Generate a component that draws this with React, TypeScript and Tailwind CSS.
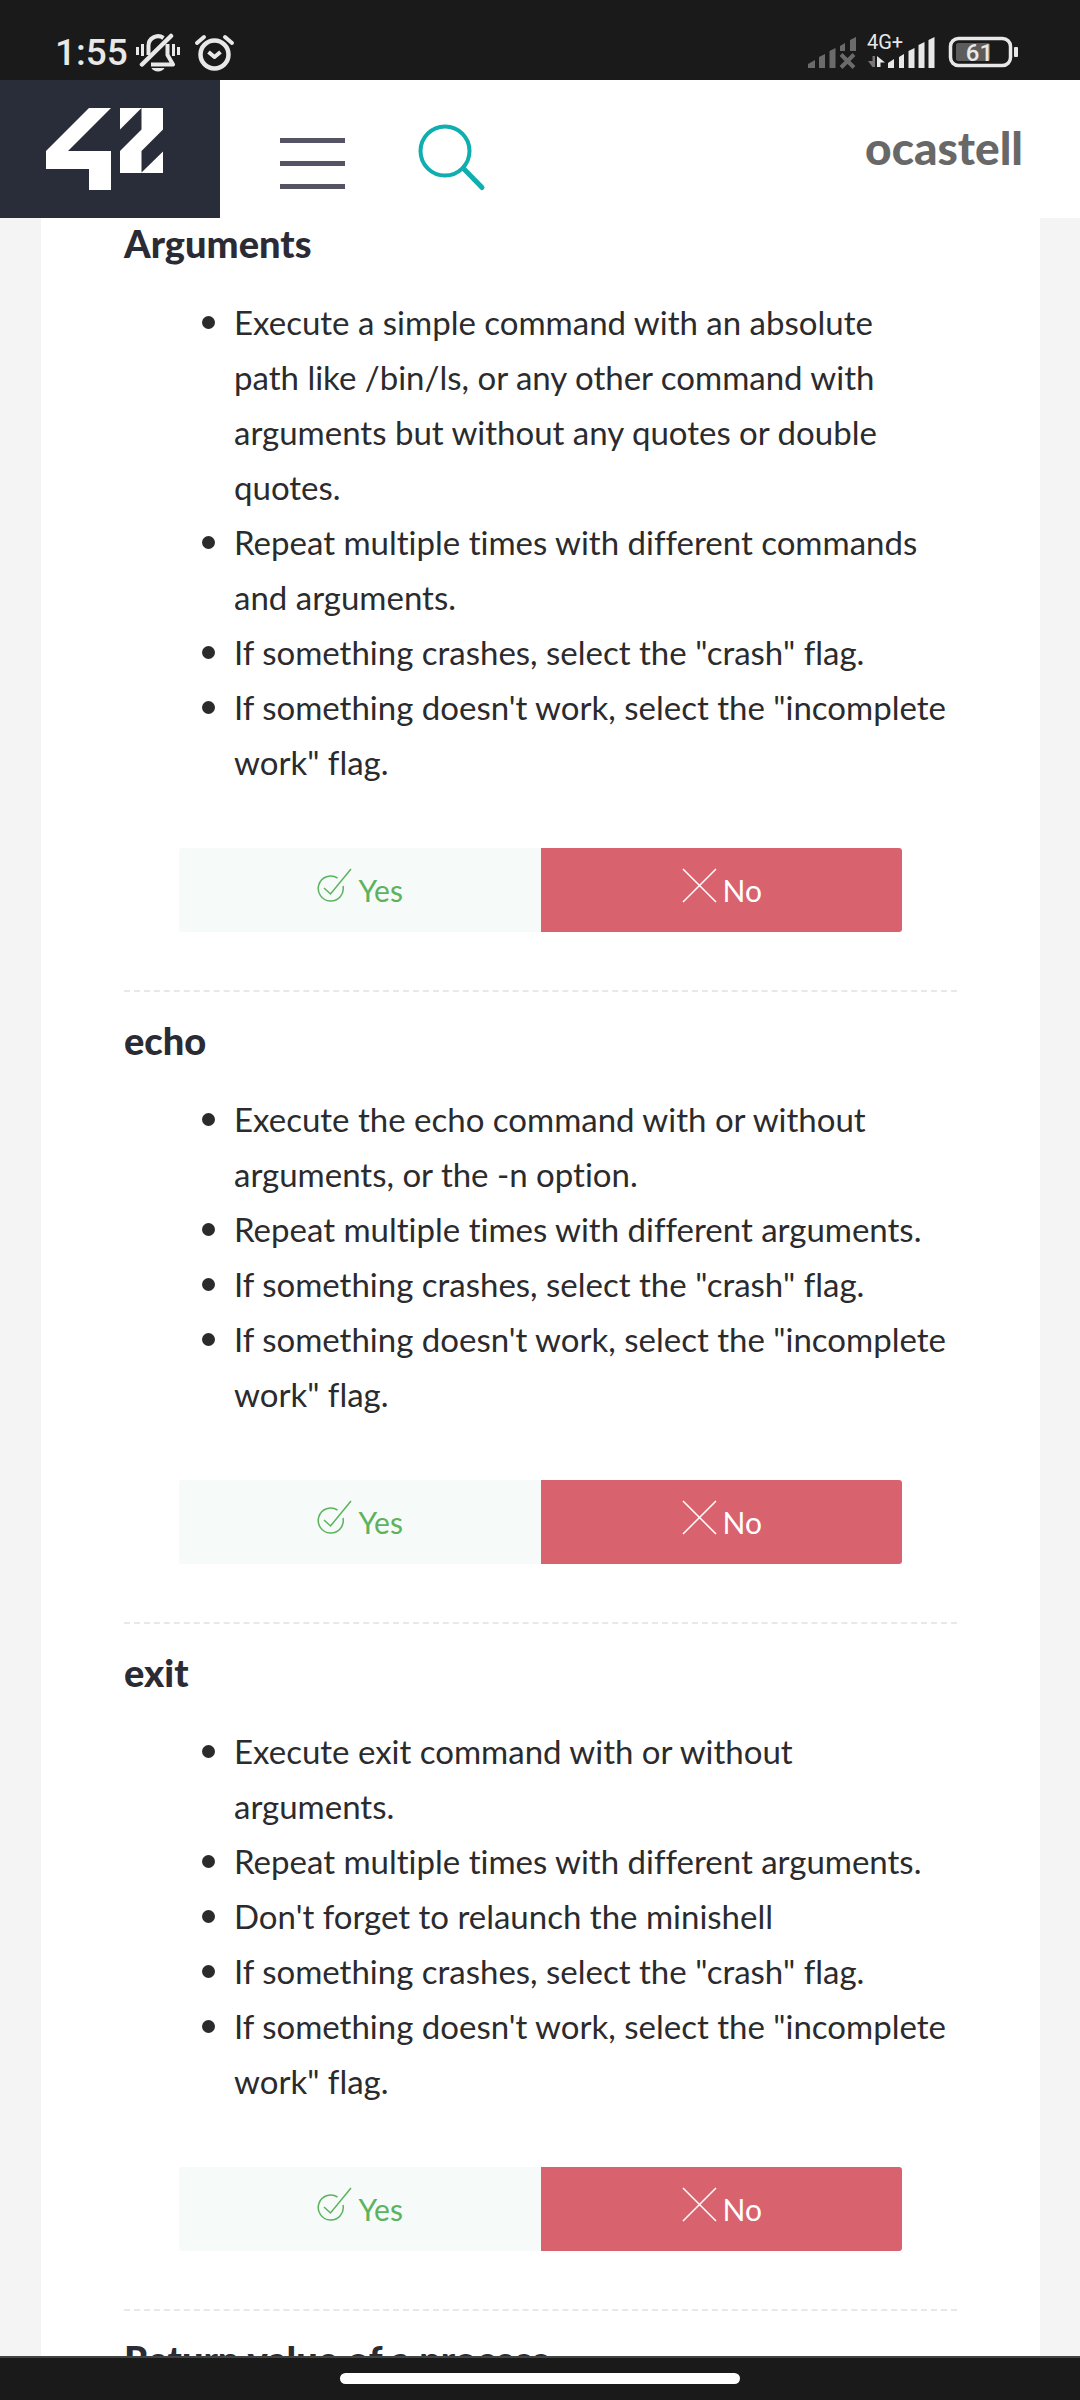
import { useState } from 'react';

type Item = { title: string; points: string[] };

const ITEMS: Item[] = [
  {
    title: 'Arguments',
    points: [
      'Execute a simple command with an absolute path\u00a0like /bin/ls, or any other command with arguments but without any quotes or double quotes.',
      'Repeat multiple times with different commands and arguments.',
      'If something crashes, select the "crash" flag.',
      'If something doesn\'t work, select the "incomplete work" flag.',
    ],
  },
  {
    title: 'echo',
    points: [
      'Execute the echo command with or without arguments, or the -n option.',
      'Repeat multiple times with different arguments.',
      'If something crashes, select the "crash" flag.',
      'If something doesn\'t work, select the "incomplete work" flag.',
    ],
  },
  {
    title: 'exit',
    points: [
      'Execute exit command with or without arguments.',
      'Repeat multiple times with different arguments.',
      "Don't forget to relaunch the minishell",
      'If something crashes, select the "crash" flag.',
      'If something doesn\'t work, select the "incomplete work" flag.',
    ],
  },
  { title: 'Return value of a process', points: [] },
];

function MutedBell() {
  return (
    <svg className="h-[40px] w-[46px]" viewBox="135 33 46 40" fill="none" stroke="#e8e8e8" aria-hidden="true">
      <path d="M137.500 47v8M142.500 44v12M173.500 44v12M178.500 47v8" strokeWidth="3" />
      <path d="M148.500 55V46a9.500 9.500 0 0 1 15-8M167.500 44v11l5.500 9.500H151" strokeWidth="4" strokeLinejoin="round" />
      <path d="M142 64.500L171 36" strokeWidth="4.500" strokeLinecap="round" />
      <path d="M151.500 68h13c-2 4.500-11 4.500-13 0z" fill="#e8e8e8" stroke="none" />
    </svg>
  );
}

function AlarmClock() {
  return (
    <svg className="h-[40px] w-[42px]" viewBox="193 32 42 40" fill="none" stroke="#e8e8e8" aria-hidden="true">
      <circle cx="214.500" cy="53.500" r="14" strokeWidth="4.500" />
      <path d="M208.500 51l6 5 6-5" strokeWidth="4" strokeLinejoin="round" />
      <path d="M197 42l7-6M232 42l-7-6" strokeWidth="4" strokeLinecap="round" />
    </svg>
  );
}

function NoSignal() {
  return (
    <svg className="h-[34px] w-[48px]" viewBox="808 36 48 34" fill="#6b6b6b" aria-hidden="true">
      <path d="M808 64l7-4v8h-7zM819 57l6-3v14h-6zM829.500 51l6-3v20h-6zM840 46l5-3v8h-5zM850 40l6-3v14h-6z" />
      <path d="M841 54.500l13 13M854 54.500l-13 13" stroke="#6b6b6b" strokeWidth="4" />
    </svg>
  );
}

function Signal() {
  return (
    <svg className="h-[34px] w-[68px]" viewBox="867 36 68 34" fill="#e8e8e8" aria-hidden="true">
      <path d="M872.500 56v11h2.500V56zM868 61h4.500v6z" fill="#777" />
      <path d="M877 56l8 6.500h-4.500V67H877z" />
      <path d="M888 63l6-4v9h-6zM899 57l5-3v14h-5zM908.500 51l6-3v20h-6zM918.500 45l6-3v26h-6zM928.500 40l6-3v31h-6z" />
    </svg>
  );
}

function Battery() {
  return (
    <svg className="h-[32px] w-[70px]" viewBox="948 36 70 32" aria-hidden="true">
      <rect x="950.500" y="38.500" width="60" height="27" rx="8" fill="none" stroke="#e8e8e8" strokeWidth="3.500" />
      <rect x="956" y="43" width="34" height="18" rx="2" fill="#5c5c5c" />
      <rect x="1014" y="47" width="4" height="10" rx="1" fill="#e8e8e8" />
    </svg>
  );
}

function StatusBar() {
  return (
    <div className="flex h-[80px] shrink-0 items-start justify-between bg-[#1a1a1a] pl-[55px] pr-[62px] pt-[32px] font-['Roboto',sans-serif] text-[#e8e8e8]">
      <div className="flex items-center">
        <span className="text-[37px] font-medium leading-[42px]">1:55</span>
        <span className="ml-[7px] flex gap-[12px]">
          <MutedBell />
          <AlarmClock />
        </span>
      </div>
      <div className="flex items-start pt-[4px]">
        <NoSignal />
        <div className="relative ml-[11px]">
          <Signal />
          <span className="absolute left-0 -top-[4px] text-[20px] leading-[20px]">4G+</span>
        </div>
        <div className="relative ml-[13px]">
          <Battery />
          <span className="absolute inset-y-0 left-0 w-[63px] text-center text-[24px] font-medium leading-[34px]">61</span>
        </div>
      </div>
    </div>
  );
}

function Logo() {
  return (
    <svg className="h-[84px] w-[118px]" viewBox="46 107 118 84" fill="#fff" aria-hidden="true">
      <path d="M89 108h22L68 151h43v39H89v-21H46v-18z" />
      <path d="M120 108h21.500L120 129.500zM141.500 108H163v21.500L141.500 151v21.500L163 151.500V173h-43v-22l21.500-21.500z" />
    </svg>
  );
}

function Header() {
  return (
    <header className="flex h-[138px] shrink-0 bg-white">
      <a href="#" aria-label="42 home" className="flex w-[220px] items-center justify-center bg-[#292d39] pr-[10px]">
        <Logo />
      </a>
      <button type="button" aria-label="Menu" className="ml-[60px] mt-[58px] flex h-[51px] w-[65px] flex-col justify-between">
        <span className="h-[5px] w-full bg-[#555464]" />
        <span className="h-[5px] w-full bg-[#555464]" />
        <span className="h-[5px] w-full bg-[#555464]" />
      </button>
      <button type="button" aria-label="Search" className="ml-[72px] mt-[42px] h-[70px] w-[70px]">
        <svg className="h-full w-full" viewBox="417 122 70 70" fill="none" stroke="#10aeae" aria-hidden="true">
          <circle cx="445" cy="151" r="24.500" strokeWidth="4" />
          <path d="M464 169l18 18.500" strokeWidth="5" strokeLinecap="round" />
        </svg>
      </button>
      <a href="#" className="ml-auto mr-[57px] mt-[43px] h-[50px] text-[46px] font-black leading-[50px] text-[#686868]">
        ocastell
      </a>
    </header>
  );
}

function YesIcon() {
  return (
    <svg className="h-[36px] w-[36px]" viewBox="317 867 36 36" fill="none" stroke="currentColor" strokeWidth="1.500" aria-hidden="true">
      <path d="M337.500 877A12.500 12.500 0 1 0 343 885" />
      <path d="M324 887l6.500 6L351 868" />
    </svg>
  );
}

function NoIcon() {
  return (
    <svg className="h-[36px] w-[36px]" viewBox="678 867 36 36" fill="none" stroke="currentColor" strokeWidth="1.500" aria-hidden="true">
      <path d="M680 868l33 33M713 868l-33 33" />
    </svg>
  );
}

function Answers({ title }: { title: string }) {
  const [answer, setAnswer] = useState<'yes' | 'no'>('no');
  return (
    <div role="group" aria-label={title} className="mx-[55px] mt-[58px] grid h-[84px] grid-cols-2">
      <button
        type="button"
        aria-pressed={answer === 'yes'}
        onClick={() => setAnswer('yes')}
        className="flex items-start justify-center gap-[6px] rounded-l-[3px] bg-[#f6faf9] pt-[20px] text-[30px] leading-[44px] text-[#5bb35e]"
      >
        <YesIcon />
        Yes
      </button>
      <button
        type="button"
        aria-pressed={answer === 'no'}
        onClick={() => setAnswer('no')}
        className="flex items-start justify-center gap-[6px] rounded-r-[3px] bg-[#d8636e] pt-[20px] text-[30px] leading-[44px] text-white"
      >
        <NoIcon />
        No
      </button>
    </div>
  );
}

function Section({ item, first }: { item: Item; first: boolean }) {
  return (
    <section className={first ? 'pb-[58px]' : 'border-t-2 border-dashed border-[#e8e8e8] pb-[58px] pt-[23px]'}>
      <h2 className="text-[38px] font-black leading-[50px] text-[#2b2b35]">{item.title}</h2>
      {item.points.length > 0 && (
        <>
          <ul className="mt-[27px] pl-[110px] text-[33px] leading-[55px]">
            {item.points.map((point) => (
              <li
                key={point}
                className="relative before:absolute before:-left-[32px] before:top-[21px] before:size-[13px] before:rounded-full before:bg-[#2b2b2e]"
              >
                {point}
              </li>
            ))}
          </ul>
          <Answers title={item.title} />
        </>
      )}
    </section>
  );
}

export default function App() {
  return (
    <div className="flex h-screen flex-col overflow-hidden bg-[#f4f4f4] font-['Lato',sans-serif] text-[#2b2b2e] [font-variant-ligatures:none]">
      <StatusBar />
      <Header />
      <main className="min-h-0 flex-1 overflow-y-auto [scrollbar-width:none]">
        <div className="ml-[41px] mr-[40px] bg-white px-[83px]">
          {ITEMS.map((item, index) => (
            <Section key={item.title} item={item} first={index === 0} />
          ))}
        </div>
      </main>
      <footer className="flex h-[44px] shrink-0 justify-center border-t-2 border-[#404544] bg-[#1a1a1a] pt-[15px]">
        <div className="h-[11px] w-[400px] rounded-full bg-white" />
      </footer>
    </div>
  );
}
